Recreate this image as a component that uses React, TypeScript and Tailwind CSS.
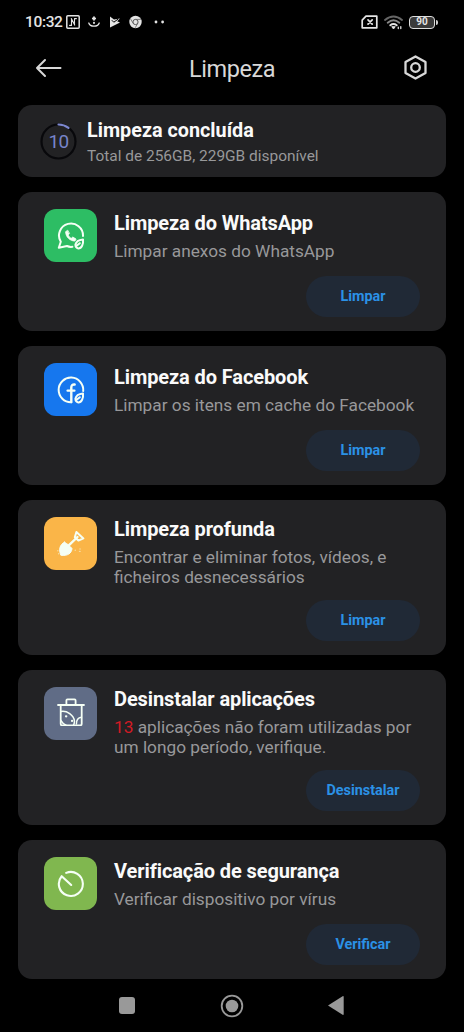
import React from "react";

const stroke = {
  fill: "none",
  stroke: "currentColor",
  strokeLinecap: "round" as const,
  strokeLinejoin: "round" as const,
};

function StatusBar() {
  return (
    <header className="flex h-11 shrink-0 items-center pl-[25px] pr-[26px] text-[#e4e4e4]">
      <span className="w-[41px] whitespace-nowrap pt-[2px] text-[15.5px] font-medium leading-none tracking-[-0.35px]">10:32</span>
      <svg className="h-[14px] w-[14px]" viewBox="0 0 14 14" {...stroke} strokeWidth="1.5">
        <rect x=".8" y=".8" width="12.4" height="12.4" rx="1" />
        <path d="M3.6 10.4h1.9V4l3.2 6M5.3 3.6l3.2 6M10.4 3.6H8.5v6.4" strokeWidth="1.1" />
      </svg>
      <svg className="ml-[8px] h-[14px] w-[12px]" viewBox="0 0 12 14" {...stroke} strokeWidth="1.3">
        <path d="M.8 8C2 12.2 10 12.2 11.2 8" />
        <path d="M6 2.2v2.6M4.8 3.5h2.4" strokeWidth="1.8" />
        <circle cx="6" cy="7.9" r=".4" />
      </svg>
      <svg className="ml-[9px] h-[14px] w-[12px]" viewBox="0 0 12 14">
        <path d="M1 1.5 5 4.4 11 3.5 8.2 6.2 11 7.4 1 12.6Z" fill="currentColor" />
        <path d="m2.8 5.2 2 2L9.3 4" fill="none" stroke="#000" strokeWidth="1" />
      </svg>
      <svg className="ml-[8px] h-[14px] w-[13px]" viewBox="0 0 13 14">
        <circle cx="6.5" cy="7" r="6.2" fill="currentColor" />
        <circle cx="6.5" cy="7" r="2.6" fill="none" stroke="#555" strokeWidth="1" />
        <path d="M6.5 4.4h5.3M4.2 8.4 1.6 4M8.7 8.4l-2.5 4.4" stroke="#666" strokeWidth=".8" />
      </svg>
      <svg className="ml-[12px] h-[4px] w-[11px]" viewBox="0 0 11 4" fill="currentColor">
        <circle cx="2" cy="2" r="1.4" />
        <circle cx="8.6" cy="2" r="1.4" />
      </svg>
      <svg className="ml-auto h-[14px] w-[17px]" viewBox="0 0 17 14" {...stroke} strokeWidth="1.7">
        <path d="M5 1.2h10.8v11.6H1.2V5.2Z" />
        <path d="m7 4.8 4.2 4.4m0-4.4L7 9.2" />
      </svg>
      <svg className="ml-[6px] h-[15px] w-[19px]" viewBox="0 0 19 15" {...stroke} strokeWidth="1.9">
        <path d="M1 5Q9.5-2 18 5" stroke="#666" />
        <path d="M3.7 7.7q5.8-4.8 11.6 0" stroke="#888" />
        <path d="M6.3 10.3q3.2-2.5 6.4 0" />
        <path d="m8 12 1.5 2 1.5-2Z" fill="currentColor" strokeWidth="1" />
        <path d="M14.3 12.2v1.4M16.8 11.6v2" strokeWidth="1.3" />
      </svg>
      <div className="ml-[6px] flex h-[13px] w-[26px] items-center justify-center rounded-[4px] border border-[#dedede] bg-[#3a3a3a]">
        <span className="text-[10px] font-bold leading-none">90</span>
      </div>
      <span className="ml-[1px] h-[5px] w-[2px] rounded-r bg-[#d0d0d0]" />
    </header>
  );
}

function CleanLeaf() {
  return (
    <path d="M18.4 22.6c.6-3 3.2-4.8 7.6-5.2.6 4.6-1.4 9.2-4.8 9-1.6-.2-2.8-1.6-2.8-3.8Zm1.2 1.2 3.2-2.6" />
  );
}

function WhatsAppIcon() {
  return (
    <svg className="h-[28px] w-[28px]" viewBox="0 0 28 28" {...stroke} strokeWidth="2">
      <path d="M15.4 24.8q-3 .4-5.4-.8l-8.2 1.8 2-6A12 12 0 1 1 26 14" />
      <path d="m10.4 8.4-1.8 1.3c.1 5.2 4.2 9.2 9.3 9.4l1.2-2-3.3-2.1-1.4 1.2c-1.6-.6-2.7-1.8-3.3-3.2l1.2-1.3Z" fill="currentColor" strokeWidth=".8" />
      <CleanLeaf />
    </svg>
  );
}

function FacebookIcon() {
  return (
    <svg className="h-[28px] w-[28px]" viewBox="0 0 28 28" {...stroke} strokeWidth="2">
      <path d="M14.3 26.2A12.3 12.3 0 1 1 26.2 15" />
      <path d="M14.3 26V11.5q0-3.4 3.4-3M10.6 14.6h6.8" strokeWidth="2.4" />
      <CleanLeaf />
    </svg>
  );
}

function ShovelIcon() {
  return (
    <svg className="h-[28px] w-[28px]" viewBox="0 0 28 28" {...stroke} strokeWidth="2.4">
      <path d="m11.5 15.6 9-8.6" />
      <path d="m19.4 2 7 6.4-5 2.2-3.6-3.4Z" strokeWidth="2" />
      <path d="M7.4 12.2c3 1.6 5.6 3.8 7.6 6.4-.4 4.8-4.4 7.6-11.2 6.6-2.2-6-1.2-10.4 3.6-13Z" fill="currentColor" strokeWidth="1" />
      <path d="M.8 20.8h.1M1.6 23.8h.1M18.2 20.3h.1M22.5 21.4h.6M23 19h.1" strokeWidth="1.4" opacity=".5" />
    </svg>
  );
}

function TrashIcon() {
  return (
    <svg className="-mt-[3px] h-[28px] w-[28px]" viewBox="0 0 28 28" {...stroke} strokeWidth="1.8">
      <path d="M1 7h26M9.4 6.8V2.4q0-1 1-1h7.2q1 0 1 1v4.4M3.7 7.7v18q0 1.8 1.8 1.8h17.2q2 0 2-1.8v-18" />
      <path d="M4 13.5c6-1 12.7 3.5 13.4 9.4q.2 2.4-1 4.4M19.4 26c0-4 1.9-6.4 5-6.8M4 22.6q1.6 3 5 4.6" strokeWidth="1.5" />
      <path d="M9 18.3h.3M15 22.9h.1" strokeWidth="2.2" />
    </svg>
  );
}

function ScanIcon() {
  return (
    <svg className="h-[28px] w-[28px]" viewBox="0 0 28 28" {...stroke} strokeWidth="2.1">
      <path d="M9.2 2.9A12 12 0 1 1 4.7 6.2L14.2 15" />
    </svg>
  );
}

type CardProps = {
  title: string;
  description: React.ReactNode;
  action: string;
  tile: string;
  icon: React.ReactNode;
  tall?: boolean;
};

function ActionCard({ title, description, action, tile, icon, tall = false }: CardProps) {
  return (
    <section className={`flex shrink-0 flex-col justify-between rounded-[14px] bg-[#222224] pb-[14px] pl-[26px] pr-[26px] ${tall ? "h-[155px]" : "h-[139px]"}`}>
      <div className="flex gap-[17px] pt-[17px]">
        <div className={`flex h-[53px] w-[53px] shrink-0 items-center justify-center rounded-[12px] text-[#f5fff5] ${tile}`}>{icon}</div>
        <div className={tall ? "" : "pt-[2px]"}>
          <h2 className="whitespace-nowrap text-[20px] font-bold leading-6 tracking-[-0.1px] text-[#fafafa]">{title}</h2>
          <p className="mt-[6px] whitespace-nowrap text-[17.25px] leading-5 text-[#98989a]">{description}</p>
        </div>
      </div>
      <button className="flex h-[41px] w-[114px] shrink-0 items-center justify-center self-end rounded-full bg-[#202936] text-[14.4px] font-bold text-[#2b91e6]">{action}</button>
    </section>
  );
}

export default function App() {
  return (
    <div className="flex h-[1032px] w-[464px] flex-col overflow-hidden bg-black font-['Roboto',sans-serif]">
      <StatusBar />
      <nav className="flex h-[61px] shrink-0 items-start justify-between px-[35px] text-[#d8d8d8]">
        <svg className="mt-[14px] h-[20px] w-[27px]" viewBox="0 0 27 20" {...stroke} strokeWidth="2">
          <path d="M25.5 10H2M10 2 2 10l8 8" />
        </svg>
        <h1 className="mt-[10px] text-[23.5px] leading-[30px] tracking-[-0.45px]">Limpeza</h1>
        <svg className="mt-[11px] h-[25px] w-[27px]" viewBox="0 0 27 25" {...stroke} strokeWidth="2.3">
          <path d="m13.5 1.4 10 5.7v10.8l-10 5.7-10-5.7V7.1Z" />
          <circle cx="13.5" cy="12.5" r="4.3" />
        </svg>
      </nav>
      <main className="flex flex-col gap-[15px] px-[18px]">
        <section className="flex h-[72px] shrink-0 items-center rounded-[14px] bg-[#222224] pl-[22px]">
          <div className="grid h-[37px] w-[37px] place-items-center">
            <svg className="col-start-1 row-start-1 h-[37px] w-[37px]" viewBox="0 0 37 37" {...stroke} strokeWidth="2.2">
              <circle cx="18.5" cy="18.5" r="17" stroke="#08080b" />
              <path d="M18.5 1.5A17 17 0 0 1 28.5 4.8" stroke="#7d88cf" />
            </svg>
            <span className="col-start-1 row-start-1 text-[19px] leading-none tracking-[-0.8px] text-[#7784c9]">10</span>
          </div>
          <div className="ml-[10px] pt-[3px]">
            <h2 className="whitespace-nowrap text-[19.8px] font-bold leading-6 text-[#fafafa]">Limpeza concluída</h2>
            <p className="mt-[3px] whitespace-nowrap text-[15.45px] leading-5 text-[#98989a]">Total de 256GB, 229GB disponível</p>
          </div>
        </section>
        <ActionCard title="Limpeza do WhatsApp" description="Limpar anexos do WhatsApp" action="Limpar" tile="bg-[#2dbd64]" icon={<WhatsAppIcon />} />
        <ActionCard title="Limpeza do Facebook" description="Limpar os itens em cache do Facebook" action="Limpar" tile="bg-[#1677ee]" icon={<FacebookIcon />} />
        <ActionCard tall title="Limpeza profunda" description={<>Encontrar e eliminar fotos, vídeos, e<br />ficheiros desnecessários</>} action="Limpar" tile="bg-[#fab548]" icon={<ShovelIcon />} />
        <ActionCard tall title="Desinstalar aplicações" description={<><span className="text-[#d31a25]">13</span> aplicações não foram utilizadas por<br />um longo período, verifique.</>} action="Desinstalar" tile="bg-[#606c86]" icon={<TrashIcon />} />
        <ActionCard title="Verificação de segurança" description="Verificar dispositivo por vírus" action="Verificar" tile="bg-[#80b74f]" icon={<ScanIcon />} />
      </main>
      <footer className="flex flex-1 items-center justify-between pl-[119px] pr-[120px] text-[#999]">
        <span className="h-[17px] w-[16px] rounded-[3px] bg-[#999]" />
        <svg className="h-[24px] w-[24px]" viewBox="0 0 24 24">
          <circle cx="12" cy="12" r="10.3" fill="none" stroke="currentColor" strokeWidth="1.8" />
          <circle cx="12" cy="12" r="6.3" fill="currentColor" />
        </svg>
        <svg className="h-[19px] w-[16px]" viewBox="0 0 16 19">
          <path d="M0 9.5 15 0q.7 0 .7.7v17.6q0 .7-.7.7Z" fill="currentColor" />
        </svg>
      </footer>
    </div>
  );
}
